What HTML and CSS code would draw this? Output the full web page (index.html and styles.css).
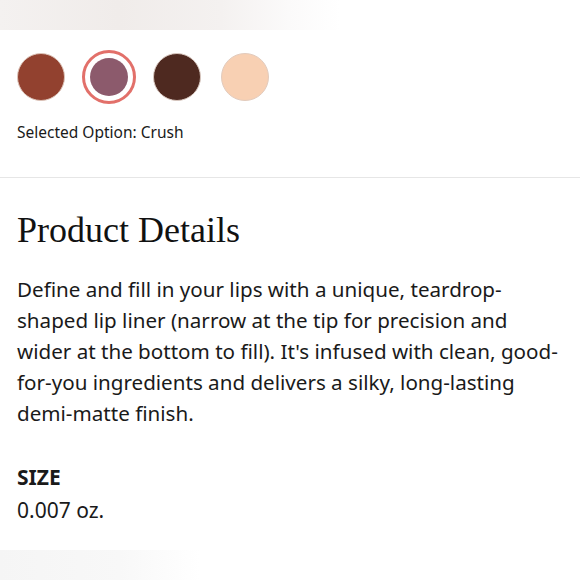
FILE: index.html
```html
<!DOCTYPE html>
<html>
<head>
<meta charset="utf-8">
<link rel="stylesheet" href="styles.css">
</head>
<body>
<div class="top-fade"></div>
<section class="options">
  <div class="swatches">
    <span class="swatch s1"></span>
    <span class="swatch s2 selected"><span class="inner"></span></span>
    <span class="swatch s3"></span>
    <span class="swatch s4"></span>
  </div>
  <p class="selected-label">Selected Option: Crush</p>
</section>
<section class="details">
  <h2 class="title">Product Details</h2>
  <p class="desc">Define and fill in your lips with a unique, teardrop-shaped lip liner (narrow at the tip for precision and wider at the bottom to fill). It's infused with clean, good-for-you ingredients and delivers a silky, long-lasting demi-matte finish.</p>
  <h3 class="size-label">SIZE</h3>
  <p class="size-value">0.007 oz.</p>
</section>
<div class="bottom-fade"></div>
</body>
</html>
```
FILE: styles.css
```css
html, body { margin: 0; padding: 0; background: #fff; }
body { width: 580px; height: 580px; overflow: hidden; position: relative; font-family: "Noto Sans", "Open Sans", sans-serif; color: #1a1a1a; }
.top-fade { height: 30px; width: 340px; background: linear-gradient(90deg, #f4f1f0 0%, #f0ecea 35%, #f4f1f0 65%, #fbfafa 85%, rgba(255,255,255,0) 100%); }
.options { padding: 20px 0 35px 17px; border-bottom: 1px solid #e6e6e6; }
.swatches { display: flex; gap: 20px; align-items: center; }
.swatch { width: 48px; height: 48px; border-radius: 50%; box-sizing: border-box; display: flex; align-items: center; justify-content: center; }
.s1 { background: #92412f; border: 1px solid #dcc3b8; }
.s2 { width: 54px; height: 54px; margin: 0 -3px; border: 3px solid #e2706a; background: #fff; }
.s2 .inner { width: 38px; height: 38px; border-radius: 50%; background: #8c5a6c; }
.s3 { background: #4e2920; border: 1px solid #d8c7bf; }
.s4 { background: #f8d0b3; border: 1px solid #e2cbbd; }
.selected-label { margin: 18px 0 0; font-size: 15.5px; line-height: 20px; }
.details { padding: 0 17px; }
.title { font-family: "Liberation Serif", "DejaVu Serif", serif; font-weight: 400; font-size: 36px; margin: 32px 0 0; line-height: 40px; color: #111; }
.desc { margin: 24px 0 0; font-size: 20.6px; line-height: 31px; }
.size-label { margin: 35px 0 0; font-size: 21px; font-weight: 700; line-height: 26px; }
.size-value { margin: 7px 0 0; font-size: 21px; line-height: 26px; }
.bottom-fade { position: absolute; left: 0; bottom: 0; height: 30px; width: 200px; background: linear-gradient(90deg, #f5f5f5, #f8f8f8 60%, rgba(255,255,255,0)); }
```
